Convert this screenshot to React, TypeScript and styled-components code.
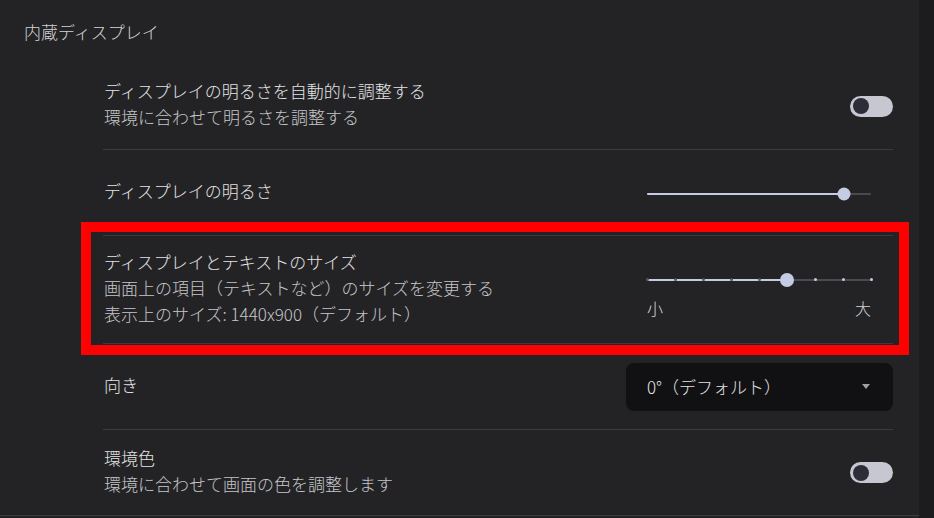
import React from 'react';
import styled, { createGlobalStyle } from 'styled-components';

const GlobalStyle = createGlobalStyle`
  html, body {
    margin: 0;
    padding: 0;
    background: #232325;
  }
  body {
    font-family: "Noto Sans CJK JP", "Noto Sans", sans-serif;
    color: #e3e3e3;
  }
`;

function Toggle() {
  return (
    <ToggleTrack>
      <ToggleKnob />
    </ToggleTrack>
  );
}

function Slider({ value, steps }: { value: number; steps?: number }) {
  const ticks = steps ? Array.from({ length: steps + 1 }, (_, i) => i / steps) : [];
  return (
    <SliderBox>
      <Track>
        <Fill style={{ width: `${value * 100}%` }} />
        {ticks.map((t, i) =>
          Math.abs(t - value) < 0.001 ? null : (
            <Tick key={i} $active={t < value} style={{ left: `${t * 100}%` }} />
          )
        )}
        <Thumb $size={steps ? 14 : 13} style={{ left: `${value * 100}%` }} />
      </Track>
    </SliderBox>
  );
}

export default function App() {
  return (
    <>
      <GlobalStyle />
      <Page>
        <Main>
          <Heading>内蔵ディスプレイ</Heading>
          <List>
            <Row>
              <Texts>
                <Title>ディスプレイの明るさを自動的に調整する</Title>
                <Sub>環境に合わせて明るさを調整する</Sub>
              </Texts>
              <Toggle />
            </Row>
            <Row>
              <Texts>
                <Title>ディスプレイの明るさ</Title>
              </Texts>
              <Control>
                <Slider value={0.88} />
              </Control>
            </Row>
            <Row $tall>
              <Texts>
                <Title>ディスプレイとテキストのサイズ</Title>
                <Sub>画面上の項目（テキストなど）のサイズを変更する</Sub>
                <Sub>表示上のサイズ: 1440x900（デフォルト）</Sub>
              </Texts>
              <Control $stacked>
                <Slider value={5 / 8} steps={8} />
                <Ends>
                  <span>小</span>
                  <span>大</span>
                </Ends>
              </Control>
              <Highlight />
            </Row>
            <Row>
              <Texts>
                <Title>向き</Title>
              </Texts>
              <Select>
                <span>0°（デフォルト）</span>
                <Caret />
              </Select>
            </Row>
            <Row>
              <Texts>
                <Title>環境色</Title>
                <Sub>環境に合わせて画面の色を調整します</Sub>
              </Texts>
              <Toggle />
            </Row>
          </List>
          <Rule />
        </Main>
        <ScrollStrip />
      </Page>
    </>
  );
}

const Page = styled.div`
  display: flex;
  width: 934px;
  height: 518px;
  overflow: hidden;
`;

const Main = styled.div`
  width: 919px;
  flex-shrink: 0;
`;

const ScrollStrip = styled.div`
  flex: 1;
  background: #1c1c1e;
`;

const Heading = styled.h2`
  margin: 0;
  box-sizing: border-box;
  height: 63px;
  padding: 19px 0 0 24px;
  font-size: 17px;
  line-height: 26px;
  font-weight: 300;
  color: #d2d2d4;
`;

const List = styled.div`
  padding: 0 26px 0 103px;
`;

const Row = styled.div<{ $tall?: boolean }>`
  position: relative;
  box-sizing: border-box;
  display: flex;
  align-items: center;
  justify-content: space-between;
  height: ${({ $tall }) => ($tall ? 108 : 86)}px;
  border-top: 1px solid #3b3b3e;

  &:first-child {
    border-top: none;
  }
`;

const Texts = styled.div`
  display: flex;
  flex-direction: column;
  padding: 0 0 4px 1px;
`;

const Title = styled.div`
  font-size: 17px;
  line-height: 26px;
  font-weight: 300;
  color: #e3e3e5;
`;

const Sub = styled.div`
  font-size: 17px;
  line-height: 26px;
  font-weight: 300;
  color: #c6c6c9;
`;

const ToggleTrack = styled.div`
  display: flex;
  align-items: center;
  width: 43px;
  height: 21px;
  border-radius: 11px;
  background: #c6c7d0;
  padding: 0 3px;
  box-sizing: border-box;
`;

const ToggleKnob = styled.div`
  width: 16px;
  height: 16px;
  border-radius: 50%;
  background: #2d2d37;
`;

const Control = styled.div<{ $stacked?: boolean }>`
  display: flex;
  flex-direction: column;
  width: 224px;
  margin-right: 22px;
  padding-top: ${({ $stacked }) => ($stacked ? 10 : 2)}px;
`;

const SliderBox = styled.div`
  display: flex;
  align-items: center;
  height: 18px;
`;

const Track = styled.div`
  position: relative;
  width: 100%;
  height: 2px;
  background: #4a4a4e;
  border-radius: 1px;
`;

const Fill = styled.div`
  height: 100%;
  background: #c4cbe3;
  border-radius: 1px;
`;

const Tick = styled.div<{ $active: boolean }>`
  position: absolute;
  top: -0.5px;
  width: 3px;
  height: 3px;
  margin-left: -1.5px;
  border-radius: 50%;
  background: ${({ $active }) => ($active ? '#56575f' : '#c4cbe3')};
`;

const Thumb = styled.div<{ $size: number }>`
  position: absolute;
  top: 50%;
  width: ${({ $size }) => $size}px;
  height: ${({ $size }) => $size}px;
  transform: translate(-50%, -50%);
  border-radius: 50%;
  background: #c4cbe3;
`;

const Ends = styled.div`
  display: flex;
  justify-content: space-between;
  margin-top: 8px;
  font-size: 16px;
  line-height: 22px;
  font-weight: 300;
  color: #d8d8da;
`;

const Select = styled.div`
  box-sizing: border-box;
  display: flex;
  align-items: center;
  justify-content: space-between;
  width: 267px;
  height: 48px;
  padding: 0 23px 0 21px;
  border-radius: 8px;
  background: #111113;
  font-size: 17px;
  font-weight: 300;
  color: #e3e3e5;
`;

const Caret = styled.div`
  width: 0;
  height: 0;
  border-left: 4.5px solid transparent;
  border-right: 4.5px solid transparent;
  border-top: 5px solid #a0a0a4;
`;

const Highlight = styled.div`
  position: absolute;
  top: -14px;
  bottom: -12px;
  left: -22px;
  right: -16px;
  border: 10px solid #ff0000;
  pointer-events: none;
`;

const Rule = styled.div`
  height: 1px;
  background: #3b3b3e;
`;
